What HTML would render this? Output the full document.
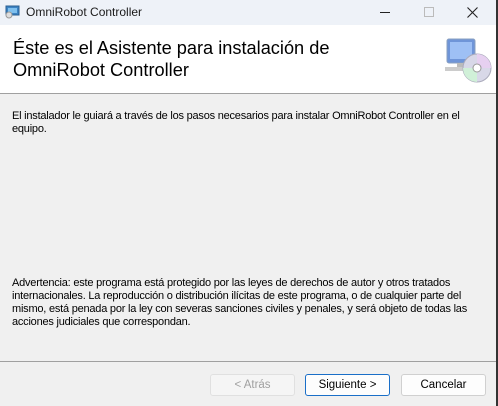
<!DOCTYPE html>
<html><head><meta charset="utf-8"><style>
*{margin:0;padding:0;box-sizing:border-box}
body{width:498px;height:406px;overflow:hidden;background:#f0f0f0;font-family:"Liberation Sans",sans-serif;position:relative}
.tb{position:absolute;left:0;top:0;width:498px;height:25px;background:#eef2f8}
.tb .t{position:absolute;left:26px;top:5px;font-size:12px;color:#1a1a1a}
.hdr{position:absolute;left:0;top:25px;width:496px;height:69px;background:#fff;border-bottom:1px solid #a0a0a0}
.h1{position:absolute;left:13px;top:12px;font-size:18.2px;line-height:22px;color:#000}
.p{position:absolute;left:12px;font-size:11px;line-height:13px;color:#000;letter-spacing:-0.22px;width:470px}
.sep{position:absolute;left:0;top:361px;width:496px;height:1px;background:#a0a0a0}
.btn{position:absolute;top:374px;width:85px;height:22px;border:1px solid #d0d0d0;border-radius:3px;background:#fdfdfd;font-size:11.5px;text-align:center;line-height:20px;color:#000}
.rb{position:absolute;right:0;top:0;width:2px;height:406px;background:#333}
</style></head><body>
<div class="tb">
<svg style="position:absolute;left:5px;top:5px" width="15" height="14"><rect x="1" y="1" width="13" height="9" fill="#3b83c4" stroke="#2a5f90"/><rect x="3" y="3" width="9" height="5" fill="#7fc0ee"/><circle cx="4" cy="10" r="3" fill="#ddd" stroke="#999"/></svg>
<div class="t">OmniRobot Controller</div>
<div style="position:absolute;left:380px;top:12px;width:10px;height:1px;background:#222"></div>
<div style="position:absolute;left:424px;top:7px;width:10px;height:10px;border:1px solid #bbb"></div>
<svg style="position:absolute;left:467px;top:7px" width="11" height="11"><path d="M0.5 0.5L10.5 10.5M10.5 0.5L0.5 10.5" stroke="#222" stroke-width="1.1"/></svg>
</div>
<div class="hdr">
<div class="h1">Éste es el Asistente para instalación de<br>OmniRobot Controller</div>
<svg style="position:absolute;left:445px;top:12px" width="48" height="48">
<rect x="2" y="2" width="28" height="24" rx="2" fill="#6f95d8" stroke="#8aa0c0"/>
<rect x="5" y="5" width="22" height="17" fill="#9ec0f5"/>
<rect x="12" y="26" width="8" height="4" fill="#bbb"/>
<rect x="0" y="30" width="20" height="4" fill="#ccc"/>
<circle cx="32" cy="31" r="14" fill="#d8d8e8" stroke="#aab"/>
<path d="M32 17A14 14 0 0 1 46 31L32 31Z" fill="#e6d0f0"/>
<path d="M18 31A14 14 0 0 0 32 45L32 31Z" fill="#d0f0d8"/>
<circle cx="32" cy="31" r="4" fill="#fff" stroke="#999"/>
</svg>
</div>
<div class="p" style="top:110px">El instalador le guiará a través de los pasos necesarios para instalar OmniRobot Controller en el equipo.</div>
<div class="p" style="top:277px">Advertencia: este programa está protegido por las leyes de derechos de autor y otros tratados internacionales. La reproducción o distribución ilícitas de este programa, o de cualquier parte del mismo, está penada por la ley con severas sanciones civiles y penales, y será objeto de todas las acciones judiciales que correspondan.</div>
<div class="sep"></div>
<div class="btn" style="left:210px;color:#a0a0a0;background:#f5f5f5;border-color:#e0e0e0">&lt; Atrás</div>
<div class="btn" style="left:305px;border:1px solid #1a6fc8">Siguiente &gt;</div>
<div class="btn" style="left:401px">Cancelar</div>
<div class="rb"></div>
</body></html>
